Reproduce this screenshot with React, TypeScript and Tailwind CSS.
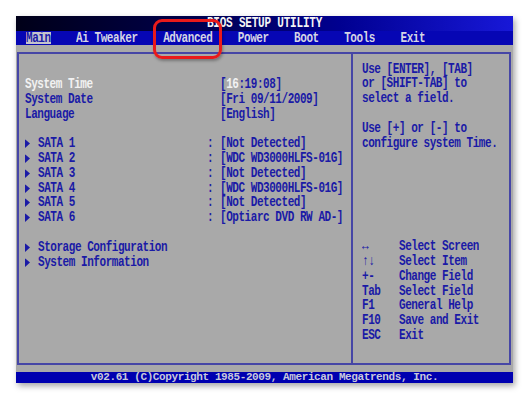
import React from "react";

const mono =
  "font-['Liberation_Mono',monospace] font-bold text-[11px] tracking-[-0.45px]";

function Tri({ color = "#1a1aa6" }: { color?: string }) {
  return (
    <span className="inline-flex w-[13px] h-full items-center">
      <svg width="5" height="7" viewBox="0 0 5 7">
        <polygon points="0,0 5,3.5 0,7" fill={color} />
      </svg>
    </span>
  );
}

function Row({
  children,
  className = "",
}: {
  children?: React.ReactNode;
  className?: string;
}) {
  return (
    <div
      className={`h-[14.8px] leading-[14.8px] whitespace-pre flex items-center scale-y-[1.25] ${className}`}
    >
      {children}
    </div>
  );
}

function Item({
  label,
  value,
  colon = true,
  tri = false,
  selected = false,
}: {
  label?: string;
  value?: React.ReactNode;
  colon?: boolean;
  tri?: boolean;
  selected?: boolean;
}) {
  return (
    <Row>
      <span className="w-[182px] flex h-full items-center">
        {tri && <Tri />}
        <span className={selected ? "text-[#f2f2f2]" : "text-[#1a1aa6]"}>
          {label}
        </span>
      </span>
      <span className="w-[13px] text-[#1a1aa6]">{colon ? ":" : ""}</span>
      <span className="text-[#1a1aa6]">{value}</span>
    </Row>
  );
}

function Key({ k, d }: { k: string; d: string }) {
  return (
    <Row>
      <span className="w-[37px] text-[#1a1aa6]">{k}</span>
      <span className="text-[#1a1aa6]">{d}</span>
    </Row>
  );
}

export default function App() {
  const menu = ["Main", "Ai Tweaker", "Advanced", "Power", "Boot", "Tools", "Exit"];
  return (
    <div className="w-[529px] h-[399px] bg-white relative overflow-hidden">
      <div
        className={`absolute left-[16px] top-[16px] w-[497px] h-[367px] flex flex-col bg-[#a9a9a9] shadow-[2px_3px_6px_rgba(0,0,0,0.35)] ${mono}`}
      >
        {/* title bar */}
        <div className="h-[15px] bg-[linear-gradient(90deg,#000018_0%,#00004a_35%,#000090_65%,#1818d8_100%)] flex items-center justify-center">
          <span className="text-[#f4f4f4] scale-y-[1.25] inline-block leading-[15px] tracking-[-0.2px]">
            BIOS SETUP UTILITY
          </span>
        </div>
        {/* menu bar */}
        <div className="h-[14px] bg-[#0606b4] flex items-center pl-[10px] gap-[25.5px]">
          {menu.map((m, i) =>
            i === 0 ? (
              <span
                key={m}
                className="bg-[#c4c4cc] text-[#1a1aa6] h-[12px] flex items-center"
              >
                <span className="scale-y-[1.25] inline-block">{m}</span>
              </span>
            ) : (
              <span
                key={m}
                className="text-[#d4d4e4] scale-y-[1.25] inline-block"
              >
                {m}
              </span>
            )
          )}
        </div>
        {/* content area */}
        <div className="flex-1 pt-[7px] pb-[7px] pl-[1px] pr-[2px] flex">
          <div className="flex-1 flex border-2 border-[#4646a6]">
            <div className="w-[334px] border-r-2 border-[#4646a6] pl-[6px] pt-[23px]">
              <Item
                label="System Time"
                colon={false}
                selected
                value={
                  <>
                    [<span className="text-[#f2f2f2]">16</span>:19:08]
                  </>
                }
              />
              <Item label="System Date" colon={false} value="[Fri 09/11/2009]" />
              <Item label="Language" colon={false} value="[English]" />
              <Row />
              <Item tri label="SATA 1" value="[Not Detected]" />
              <Item tri label="SATA 2" value="[WDC WD3000HLFS-01G]" />
              <Item tri label="SATA 3" value="[Not Detected]" />
              <Item tri label="SATA 4" value="[WDC WD3000HLFS-01G]" />
              <Item tri label="SATA 5" value="[Not Detected]" />
              <Item tri label="SATA 6" value="[Optiarc DVD RW AD-]" />
              <Row />
              <Item tri label="Storage Configuration" colon={false} />
              <Item tri label="System Information" colon={false} />
            </div>
            <div className="flex-1 pl-[9px] pt-[7.6px] text-[#1a1aa6]">
              <Row>Use [ENTER], [TAB]</Row>
              <Row>or [SHIFT-TAB] to</Row>
              <Row>select a field.</Row>
              <Row />
              <Row>Use [+] or [-] to</Row>
              <Row>configure system Time.</Row>
              <Row />
              <Row />
              <Row />
              <Row />
              <Row />
              <Row />
              <Key k="↔" d="Select Screen" />
              <Key k="↑↓" d="Select Item" />
              <Key k="+-" d="Change Field" />
              <Key k="Tab" d="Select Field" />
              <Key k="F1" d="General Help" />
              <Key k="F10" d="Save and Exit" />
              <Key k="ESC" d="Exit" />
            </div>
          </div>
        </div>
        {/* footer */}
        <div className="h-[11px] bg-[#0000b0] flex items-center justify-center">
          <div className="text-[#c8c8dc] text-[11px] tracking-[-0.4px] leading-[11px] whitespace-pre">
            v02.61 (C)Copyright 1985-2009, American Megatrends, Inc.
          </div>
        </div>
      </div>
      {/* red highlight */}
      <div className="absolute left-[153px] top-[19px] w-[69px] h-[40px] border-[3.5px] border-[#ea1a1a] rounded-[9px] shadow-[1px_2px_3px_rgba(0,0,0,0.3)]" />
    </div>
  );
}
